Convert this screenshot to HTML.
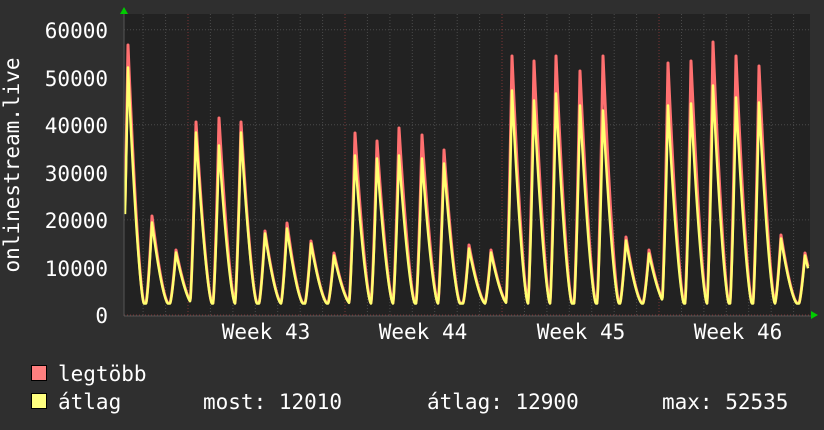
<!DOCTYPE html>
<html><head><meta charset="utf-8">
<style>
html,body{margin:0;padding:0;background:#2f2f2f;width:824px;height:430px;overflow:hidden}
svg{display:block}
text{font-family:"DejaVu Sans Mono","Liberation Mono",monospace;fill:#fff;font-size:21px}
</style></head><body>
<svg id="s" width="824" height="430" xmlns="http://www.w3.org/2000/svg">
<rect x="124" y="14" width="686" height="302" fill="#222"/>
<g id="grid"></g>
<polyline id="mx" fill="none" stroke="#ff7070" stroke-width="3" stroke-linejoin="round"/>
<polyline id="av" fill="none" stroke="#ffff70" stroke-width="2.5" stroke-linejoin="round"/>
<line x1="124" y1="316" x2="812" y2="316" stroke="#555" stroke-width="1"/>
<line x1="124" y1="12" x2="124" y2="316" stroke="#555" stroke-width="1"/>
<polygon points="120,14 128,14 124,7" fill="#0c0"/>
<polygon points="811,311 811,319 818,315" fill="#0c0"/>
<g text-anchor="end">
<text x="108" y="38">60000</text>
<text x="108" y="86">50000</text>
<text x="108" y="133">40000</text>
<text x="108" y="181">30000</text>
<text x="108" y="228">20000</text>
<text x="108" y="276">10000</text>
<text x="108" y="323">0</text>
</g>
<text transform="translate(19,165) rotate(-90)" text-anchor="middle">onlinestream.live</text>
<g text-anchor="middle">
<text x="266" y="339">Week 43</text>
<text x="423" y="339">Week 44</text>
<text x="581" y="339">Week 45</text>
<text x="738" y="339">Week 46</text>
</g>
<rect x="31.5" y="365.5" width="15" height="15" fill="#ff7f7f" stroke="#000"/>
<rect x="31.5" y="393.5" width="15" height="15" fill="#ffff7f" stroke="#000"/>
<text x="58" y="381">legtöbb</text>
<text x="58" y="409">átlag</text>
<text x="203" y="409">most: 12010</text>
<text x="427" y="409">átlag: 12900</text>
<text x="662" y="409">max: 52535</text>
</svg>
<script>
var g=document.getElementById('grid'),h='';
for(var v=0;v<=60000;v+=2000){var y=315-v*0.04755;var maj=v%10000==0;
h+='<line x1="124" x2="810" y1="'+y.toFixed(1)+'" y2="'+y.toFixed(1)+'" stroke="'+(maj?'#7a3434':'#4a4a4a')+'" stroke-dasharray="1,2"/>';}
for(var x=188-22.43*3;x<810;x+=22.43){if(x<124)continue;var wk=Math.abs(((x-188)/157.0)-Math.round((x-188)/157.0))<0.02;
h+='<line y1="14" y2="316" x1="'+x.toFixed(1)+'" x2="'+x.toFixed(1)+'" stroke="'+(wk?'#7a3434':'#4a4a4a')+'" stroke-dasharray="1,2"/>';}
g.innerHTML=h;
var P=[[128,45,67],[152,216,222],[176,250,252],[196,122,132],[219,118,145],[241,122,132],[265,231,233],[287,223,228],[311,241,243],[334,253,255],[355,133,155],[377,141,158],[399,128,155],[422,135,158],[444,150,163],[469,245,248],[491,250,252],[512,56,90],[534,61,100],[556,56,93],[580,71,105],[603,56,110],[626,237,240],[649,250,253],[668,63,105],[691,61,103],[713,42,85],[736,56,97],[759,66,102],[781,235,238],[805,253,255]];
var FL=303;
function val(x,k){var best=0;
for(var i=0;i<P.length;i++){var p=P[i][0],H=FL-P[i][k],t=x-p,f=0;
if(t>=-6&&t<=0){f=Math.pow((t+6)/6,1.4);}
else if(t>0&&t<=16){f=Math.pow(1-t/16,1.5);}
if(H*f>best)best=H*f;}
return FL-best;}
var a='',b='';
for(var x=125;x<=808;x+=0.5){a+=x+','+(val(x,1)).toFixed(1)+' ';b+=x+','+(val(x,2)+0.5).toFixed(1)+' ';}
document.getElementById('mx').setAttribute('points',a);
document.getElementById('av').setAttribute('points',b);
</script>
</body></html>
